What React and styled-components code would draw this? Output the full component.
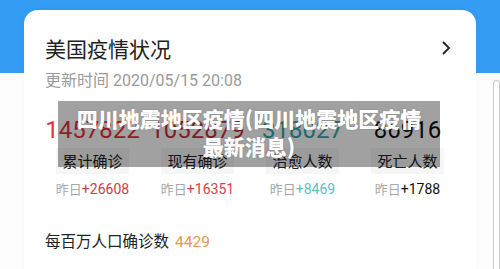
import React from "react";
import styled, { createGlobalStyle } from "styled-components";

const GlobalStyle = createGlobalStyle`
  html, body {
    margin: 0;
    padding: 0;
  }
  body {
    width: 500px;
    height: 269px;
    overflow: hidden;
    background: linear-gradient(#359cf4 0, #359cf4 73px, #fdfdfd 73px);
    font-family: "Noto Sans CJK SC", "Noto Sans", sans-serif;
  }
`;

const Page = styled.div`
  display: flex;
  align-items: flex-start;
  padding-left: 24px;
`;

const Card = styled.div`
  position: relative;
  width: 452px;
  height: 259px;
  margin-top: 10px;
  box-sizing: border-box;
  background: #fff;
  border-radius: 14px 14px 0 0;
  box-shadow: 0 0 6px rgba(0, 0, 0, 0.04);
  padding: 24px 16px 0;
`;

const PeekCard = styled.div`
  width: 40px;
  height: 189px;
  margin: 80px 0 0 17px;
  border: 1px solid #c9c9c9;
  border-bottom: none;
  border-radius: 10px 10px 0 0;
  background: #fff;
`;

const Header = styled.div`
  display: flex;
  align-items: center;
  justify-content: space-between;
  padding: 0 8px 0 5px;
`;

const Title = styled.h1`
  margin: 0;
  font-size: 21px;
  line-height: 28px;
  font-weight: 400;
  color: #222;
`;

const UpdateTime = styled.div`
  margin-top: 9px;
  padding-left: 5px;
  font-family: "Roboto", "Noto Sans CJK SC", sans-serif;
  font-size: 16px;
  line-height: 20px;
  color: #9a9a9a;
`;

const Stats = styled.div`
  display: grid;
  grid-template-columns: repeat(4, 105px);
  margin-top: 24px;
`;

const Stat = styled.div`
  display: flex;
  flex-direction: column;
  align-items: center;
`;

const Number = styled.div`
  font-family: "Roboto", "Noto Sans", sans-serif;
  font-size: 24px;
  line-height: 30px;
  color: ${(p) => p.$color};
`;

const Label = styled.div`
  margin-top: 3px;
  padding: 0 6px;
  font-size: 15px;
  line-height: 26px;
  color: #222;
  background: #f6f6f6;
`;

const Delta = styled.div`
  margin-top: 5px;
  font-size: 13px;
  line-height: 20px;
  color: #a8a8a8;

  span {
    font-family: "Roboto", "Noto Sans", sans-serif;
    font-size: 14px;
    color: ${(p) => p.$color};
  }
`;

const PerMillion = styled.div`
  margin-top: 30px;
  padding-left: 5px;
  font-size: 15.5px;
  line-height: 22px;
  color: #222;

  span {
    margin-left: 6px;
    font-family: "Roboto", "Noto Sans", sans-serif;
    color: #f0944f;
  }
`;

const Caption = styled.div`
  position: absolute;
  left: 34px;
  top: 91px;
  width: 382px;
  height: 66px;
  box-sizing: border-box;
  padding: 3px 10px 0;
  background: rgba(0, 0, 0, 0.37);
  color: #fff;
  font-size: 21px;
  font-weight: 900;
  line-height: 28px;
  text-align: center;
  text-shadow: 0 0 2px rgba(0, 0, 0, 0.2);
`;

const Chevron = () => (
  <svg width="12" height="18" viewBox="0 0 12 18">
    <polyline points="3,3 9,9 3,15" fill="none" stroke="#222" strokeWidth="1.9" />
  </svg>
);

const stats = [
  { value: "1457822", label: "累计确诊", delta: "+26608", color: "#e2343c", deltaColor: "#c8404a" },
  { value: "1052879", label: "现有确诊", delta: "+16351", color: "#c8323c", deltaColor: "#d0444f" },
  { value: "318027", label: "治愈人数", delta: "+8469", color: "#34a5ad", deltaColor: "#5cc0c8" },
  { value: "86916", label: "死亡人数", delta: "+1788", color: "#111", deltaColor: "#111" },
];

export default function App() {
  return (
    <>
      <GlobalStyle />
      <Page>
        <Card>
          <Header>
            <Title>美国疫情状况</Title>
            <Chevron />
          </Header>
          <UpdateTime>更新时间 2020/05/15 20:08</UpdateTime>
          <Stats>
            {stats.map((s) => (
              <Stat key={s.label}>
                <Number $color={s.color}>{s.value}</Number>
                <Label>{s.label}</Label>
                <Delta $color={s.deltaColor}>
                  昨日<span>{s.delta}</span>
                </Delta>
              </Stat>
            ))}
          </Stats>
          <PerMillion>
            每百万人口确诊数<span>4429</span>
          </PerMillion>
          <Caption>四川地震地区疫情(四川地震地区疫情最新消息)</Caption>
        </Card>
        <PeekCard />
      </Page>
    </>
  );
}
